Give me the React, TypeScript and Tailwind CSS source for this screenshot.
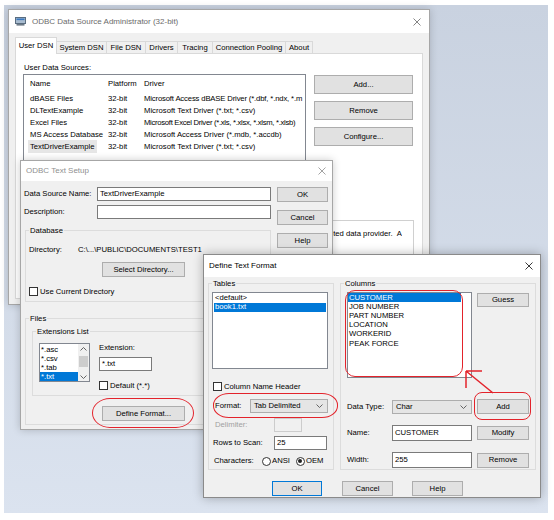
import React from 'react';

const RED = '#e3232b';

function Close({ color }: { color: string }) {
  return (
    <svg width="8" height="8" viewBox="0 0 8 8" className="shrink-0">
      <path d="M0.5 0.5L7.5 7.5M7.5 0.5L0.5 7.5" stroke={color} strokeWidth="0.9" />
    </svg>
  );
}

function Chevron({ up = false }: { up?: boolean }) {
  return (
    <svg width="7" height="4" viewBox="0 0 7 4" className="shrink-0">
      <path d={up ? 'M0.5 3.5L3.5 0.5L6.5 3.5' : 'M0.5 0.5L3.5 3.5L6.5 0.5'} fill="none" stroke="#555" strokeWidth="0.9" />
    </svg>
  );
}

function Btn({ label, primary = false, className = '' }: { label: string; primary?: boolean; className?: string }) {
  return (
    <div
      className={`flex items-center justify-center shrink-0 bg-[#e1e1e1] border ${primary ? 'border-[#0078d7]' : 'border-[#adadad]'} ${className}`}
    >
      {label}
    </div>
  );
}

function Field({ value = '', className = '' }: { value?: string; className?: string }) {
  return (
    <div className={`flex items-center shrink-0 bg-white border border-[#7a7a7a] pl-[2px] whitespace-nowrap ${className}`}>
      {value}
    </div>
  );
}

function Combo({ value, className = '' }: { value: string; className?: string }) {
  return (
    <div className={`flex items-center shrink-0 bg-[#e5e5e5] border border-[#adadad] pl-[3px] pr-[4px] ${className}`}>
      <span>{value}</span>
      <span className="ml-auto">
        <Chevron />
      </span>
    </div>
  );
}

function Check({ label, className = '' }: { label: string; className?: string }) {
  return (
    <div className={`flex items-center h-[9px] ${className}`}>
      <span className="w-[9px] h-[9px] shrink-0 border border-[#333] bg-white" />
      <span className="ml-[2px]">{label}</span>
    </div>
  );
}

function Radio({ label, checked = false }: { label: string; checked?: boolean }) {
  return (
    <div className="flex items-center">
      <span className="w-[9px] h-[9px] shrink-0 rounded-full border border-[#333] bg-white flex items-center justify-center">
        {checked && <span className="w-[4px] h-[4px] rounded-full bg-[#222]" />}
      </span>
      <span className="ml-[1px]">{label}</span>
    </div>
  );
}

function Group({ label, className = '', children }: { label: string; className?: string; children?: React.ReactNode }) {
  return (
    <fieldset className={`border border-[#dcdcdc] shrink-0 ${className}`}>
      <legend className="ml-[3px] px-[1px] leading-[9px]">{label}</legend>
      {children}
    </fieldset>
  );
}

function AdminIcon() {
  return (
    <svg width="11" height="9" viewBox="0 0 11 9" className="shrink-0">
      <rect x="0.5" y="0.5" width="10" height="6" fill="#a9bccf" stroke="#5a6d80" />
      <rect x="1.5" y="1.5" width="8" height="1.6" fill="#3a78c0" />
      <rect x="1.5" y="7" width="8" height="1.6" fill="#6d7a86" />
    </svg>
  );
}

// [name, platform, driver, tracking for the driver text]
const dataSources = [
  ['dBASE Files', '32-bit', 'Microsoft Access dBASE Driver (*.dbf, *.ndx, *.m', 'tracking-[-0.15px]'],
  ['DLTextExample', '32-bit', 'Microsoft Text Driver (*.txt; *.csv)', ''],
  ['Excel Files', '32-bit', 'Microsoft Excel Driver (*.xls, *.xlsx, *.xlsm, *.xlsb)', 'tracking-[-0.3px]'],
  ['MS Access Database', '32-bit', 'Microsoft Access Driver (*.mdb, *.accdb)', ''],
  ['TextDriverExample', '32-bit', 'Microsoft Text Driver (*.txt; *.csv)', ''],
];

const tabs = [
  { label: 'User DSN', w: 'w-[42px]' },
  { label: 'System DSN', w: 'w-[50px]' },
  { label: 'File DSN', w: 'w-[39px]' },
  { label: 'Drivers', w: 'w-[32px]' },
  { label: 'Tracing', w: 'w-[35px]' },
  { label: 'Connection Pooling', w: 'w-[73px]' },
  { label: 'About', w: 'w-[27px]' },
];

function AdminWindow() {
  return (
    <div className="absolute left-[8px] top-[9px] w-[422px] h-[296px] flex flex-col bg-[#f0f0f0] border border-[#a6a6a6] shadow-[0_0_8px_rgba(0,0,0,0.18)]">
      {/* title bar */}
      <div className="h-[23px] shrink-0 bg-white flex items-center pl-[6px] pr-[8px]">
        <AdminIcon />
        <span className="ml-[6px] text-[8px] text-[#6b6b6b]">ODBC Data Source Administrator (32-bit)</span>
        <span className="ml-auto">
          <Close color="#777" />
        </span>
      </div>

      <div className="px-[6px] pt-[4px]">
        {/* tabs */}
        <div className="flex items-end h-[16px]">
          {tabs.map((t, i) =>
            i === 0 ? (
              <div
                key={t.label}
                className={`${t.w} h-[17px] -mb-px relative z-10 bg-white border border-b-0 border-[#d9d9d9] flex items-center justify-center`}
              >
                {t.label}
              </div>
            ) : (
              <div
                key={t.label}
                className={`${t.w} h-[12px] border-t border-r border-[#d9d9d9] flex items-center justify-center`}
              >
                {t.label}
              </div>
            )
          )}
        </div>

        {/* tab panel */}
        <div className="h-[246px] bg-white border border-[#d9d9d9] px-[8px] pt-[9px]">
          <div className="h-[9px] leading-[9px]">User Data Sources:</div>
          <div className="flex mt-[2px]">
            <div className="-ml-px w-[283px] h-[127px] shrink-0 border border-[#828790] bg-white overflow-hidden pl-[6px] pt-[3px] whitespace-nowrap">
              <div className="flex h-[12px] items-center">
                <span className="w-[78px] shrink-0">Name</span>
                <span className="w-[36px] shrink-0">Platform</span>
                <span className="shrink-0">Driver</span>
              </div>
              <div className="mt-[3px]">
                {dataSources.map(([n, p, d, tr], i) => (
                  <div key={n} className="flex h-[12px] items-center">
                    <span className="w-[78px] shrink-0">
                      {i === 4 ? <span className="bg-[#e6e6e6] -ml-[2px] px-[2px] py-[2px]">{n}</span> : n}
                    </span>
                    <span className="w-[36px] shrink-0">{p}</span>
                    <span className={`shrink-0 ${tr}`}>{d}</span>
                  </div>
                ))}
              </div>
            </div>
            <div className="ml-[8px] w-[99px] flex flex-col">
              <Btn label="Add..." className="mt-[1px] h-[19px]" />
              <Btn label="Remove" className="mt-[7px] h-[19px]" />
              <Btn label="Configure..." className="mt-[7px] h-[19px]" />
            </div>
          </div>
          <div className="-ml-px mt-[19px] h-[70px] border border-[#d0d0d0] pt-[8px] pr-[11px] flex justify-end">
            {/* only the right end of this line shows past the dialog above it */}
            <div className="w-[72px] overflow-hidden flex justify-end whitespace-nowrap">
              <span className="shrink-0 leading-[10px]">ted data provider.&nbsp;&nbsp;A</span>
            </div>
          </div>
        </div>
      </div>
    </div>
  );
}

function TextSetup() {
  return (
    <div className="absolute left-[20px] top-[160px] w-[313px] h-[270px] flex flex-col bg-[#f0f0f0] border border-[#a6a6a6] shadow-[0_0_8px_rgba(0,0,0,0.2)]">
      <div className="h-[20px] shrink-0 bg-white flex items-center pl-[5px] pr-[6px]">
        <span className="text-[8px] text-[#8f8f8f]">ODBC Text Setup</span>
        <span className="ml-auto">
          <Close color="#999" />
        </span>
      </div>

      <div className="flex pl-[3px] pt-[6px]">
        <div className="w-[250px] flex flex-col">
          <div className="flex items-center h-[14px]">
            <span className="w-[73px]">Data Source Name:</span>
            <Field value="TextDriverExample" className="w-[174px] h-[14px]" />
          </div>
          <div className="flex items-center h-[14px] mt-[4px]">
            <span className="w-[73px]">Description:</span>
            <Field className="w-[174px] h-[14px]" />
          </div>

          <Group label="Database" className="mt-[7px] ml-[1px] w-[246px] h-[76px]">
            <div className="pl-[3px]">
              <div className="flex items-center h-[10px] mt-[10px]">
                <span className="w-[49px]">Directory:</span>
                <span>C:\...\PUBLIC\DOCUMENTS\TEST1</span>
              </div>
              <Btn label="Select Directory..." className="mt-[7px] ml-[73px] w-[83px] h-[15px]" />
              <Check label="Use Current Directory" className="mt-[10px]" />
            </div>
          </Group>

          <Group label="Files" className="mt-[12px] ml-[1px] w-[246px] h-[111px]">
            <div className="pl-[6px]">
              <Group label="Extensions List" className="mt-[4px] w-[230px] h-[69px]">
                <div className="flex pl-[6px] mt-[7px]">
                  <div className="w-[51px] h-[39px] border border-[#828790] bg-white flex">
                    <div className="flex-1 pt-[1px]">
                      <div className="h-[9px] flex items-center pl-[1px]">*.asc</div>
                      <div className="h-[9px] flex items-center pl-[1px]">*.csv</div>
                      <div className="h-[9px] flex items-center pl-[1px]">*.tab</div>
                      <div className="h-[9px] flex items-center pl-[1px] bg-[#0078d7] text-white">*.txt</div>
                    </div>
                    <div className="w-[11px] bg-[#f0f0f0] flex flex-col items-center">
                      <div className="h-[9px] flex items-center">
                        <Chevron up />
                      </div>
                      <div className="mt-[3px] w-[9px] h-[11px] bg-[#cdcdcd]" />
                      <div className="mt-auto h-[9px] flex items-center">
                        <Chevron />
                      </div>
                    </div>
                  </div>
                  <div className="ml-[9px] flex flex-col">
                    <div className="h-[10px] leading-[10px]">Extension:</div>
                    <Field value="*.txt" className="mt-[4px] w-[53px] h-[14px]" />
                    <Check label="Default (*.*)" className="mt-[10px]" />
                  </div>
                </div>
              </Group>
              <Btn label="Define Format..." className="mt-[10px] ml-[70px] w-[83px] h-[15px]" />
            </div>
          </Group>
        </div>

        <div className="ml-[3px] w-[51px] flex flex-col">
          <Btn label="OK" className="h-[15px]" />
          <Btn label="Cancel" className="mt-[8px] h-[15px]" />
          <Btn label="Help" className="mt-[8px] h-[15px]" />
        </div>
      </div>
    </div>
  );
}

const columns = ['CUSTOMER', 'JOB NUMBER', 'PART NUMBER', 'LOCATION', 'WORKERID', 'PEAK FORCE'];

function DefineFormat() {
  return (
    <div className="absolute left-[203px] top-[254px] w-[338px] h-[244px] flex flex-col bg-[#f0f0f0] border border-[#8a8a8a] shadow-[0_0_10px_rgba(0,0,0,0.28)]">
      <div className="h-[22px] shrink-0 bg-white flex items-center pl-[5px] pr-[7px]">
        <span className="text-[8px]">Define Text Format</span>
        <span className="ml-auto">
          <Close color="#222" />
        </span>
      </div>

      <div className="px-[4px] pt-[2px]">
        <div className="flex">
          {/* Tables */}
          <Group label="Tables" className="w-[126px] h-[191px]">
            <div className="flex flex-col">
              <div className="mt-[4px] ml-[3px] w-[116px] h-[77px] border border-[#828790] bg-white">
                <div className="h-[9.5px] flex items-center pl-[2px]">&lt;default&gt;</div>
                <div className="h-[9.5px] flex items-center pl-[1px] mx-px bg-[#0078d7] text-white">book1.txt</div>
              </div>
              <Check label="Column Name Header" className="mt-[13px] ml-[4px]" />
              <div className="flex items-center h-[14px] mt-[8px]">
                <span className="ml-[6px] w-[35px]">Format:</span>
                <Combo value="Tab Delimited" className="w-[78px] h-[14px]" />
              </div>
              <div className="flex items-center h-[14px] mt-[5px]">
                <span className="ml-[6px] w-[59px] text-[#a0a0a0]">Delimiter:</span>
                <div className="w-[28px] h-[14px] border border-[#cccccc] bg-[#f0f0f0]" />
              </div>
              <div className="flex items-center h-[14px] mt-[4px]">
                <span className="ml-[4px] w-[61px]">Rows to Scan:</span>
                <Field value="25" className="w-[53px] h-[14px]" />
              </div>
              <div className="flex items-center h-[12px] mt-[5px]">
                <span className="ml-[5px] w-[48px]">Characters:</span>
                <Radio label="ANSI" />
                <span className="ml-[6px]">
                  <Radio label="OEM" checked />
                </span>
              </div>
            </div>
          </Group>

          {/* Columns */}
          <Group label="Columns" className="ml-[6px] w-[196px] h-[191px]">
            <div className="flex flex-col">
              <div className="flex mt-[4px]">
                <div className="ml-[6px] w-[125px] h-[86px] border border-[#828790] bg-white">
                  {columns.map((c, i) => (
                    <div
                      key={c}
                      className={`h-[9.2px] flex items-center pl-[1px] ${i === 0 ? 'w-[113px] bg-[#0078d7] text-white' : ''}`}
                    >
                      {c}
                    </div>
                  ))}
                </div>
                <Btn label="Guess" className="ml-[5px] mt-[1px] w-[52px] h-[14px]" />
              </div>
              <div className="flex items-center h-[15px] mt-[21px]">
                <span className="ml-[6px] w-[45px]">Data Type:</span>
                <Combo value="Char" className="w-[80px] h-[14px]" />
                <Btn label="Add" className="ml-[5px] w-[52px] h-[15px]" />
              </div>
              <div className="flex items-center h-[16px] mt-[11px]">
                <span className="ml-[6px] w-[45px]">Name:</span>
                <Field value="CUSTOMER" className="w-[80px] h-[16px]" />
                <Btn label="Modify" className="ml-[5px] w-[52px] h-[14px]" />
              </div>
              <div className="flex items-center h-[16px] mt-[11px]">
                <span className="ml-[6px] w-[45px]">Width:</span>
                <Field value="255" className="w-[80px] h-[16px]" />
                <Btn label="Remove" className="ml-[5px] w-[52px] h-[15px]" />
              </div>
            </div>
          </Group>
        </div>

        <div className="flex mt-[11px]">
          <Btn label="OK" primary className="ml-[64px] w-[50px] h-[15px]" />
          <Btn label="Cancel" className="ml-[20px] w-[51px] h-[15px]" />
          <Btn label="Help" className="ml-[19px] w-[51px] h-[15px]" />
        </div>
      </div>
    </div>
  );
}

function Annotations() {
  return (
    <>
      <div className="absolute left-[92px] top-[398px] w-[102px] h-[30px] rounded-[18px/15px] border-[1.5px] border-[#e3232b]" />
      <div className="absolute left-[213px] top-[393px] w-[125px] h-[25px] rounded-[16px/12px] border-[1.5px] border-[#e3232b]" />
      <div className="absolute left-[345px] top-[290px] w-[118px] h-[87px] rounded-[10px] border-[1.5px] border-[#e3232b]" />
      <div className="absolute left-[474px] top-[392px] w-[57px] h-[28px] rounded-[8px] border-[1.5px] border-[#e3232b]" />
      <svg className="absolute left-[462px] top-[366px]" width="36" height="30" viewBox="0 0 36 30">
        <path d="M4 5L31 27M4 5V22M4 5H20" fill="none" stroke={RED} strokeWidth="1.5" />
      </svg>
    </>
  );
}

export default function App() {
  return (
    <div className="relative w-[554px] h-[520px] overflow-hidden bg-white text-[7.7px] leading-none text-black font-['Liberation_Sans',Arial,sans-serif]">
      <div className="ml-[4px] mt-[5px] w-[544px] h-[508px] bg-linear-to-b from-[#c9d2e0] to-[#dbe3ef]" />
      <AdminWindow />
      <TextSetup />
      <DefineFormat />
      <Annotations />
    </div>
  );
}
